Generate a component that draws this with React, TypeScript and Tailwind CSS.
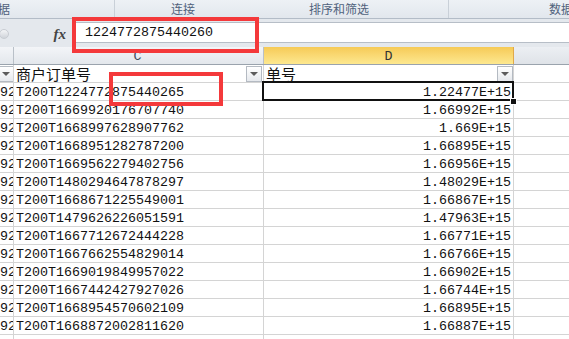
import React from "react";

const C_DATA = [
  "T200T1224772875440265",
  "T200T1669920176707740",
  "T200T1668997628907762",
  "T200T1668951282787200",
  "T200T1669562279402756",
  "T200T1480294647878297",
  "T200T1668671225549001",
  "T200T1479626226051591",
  "T200T1667712672444228",
  "T200T1667662554829014",
  "T200T1669019849957022",
  "T200T1667442427927026",
  "T200T1668954570602109",
  "T200T1668872002811620",
];
const D_DATA = [
  "1.22477E+15",
  "1.66992E+15",
  "1.669E+15",
  "1.66895E+15",
  "1.66956E+15",
  "1.48029E+15",
  "1.66867E+15",
  "1.47963E+15",
  "1.66771E+15",
  "1.66766E+15",
  "1.66902E+15",
  "1.66744E+15",
  "1.66895E+15",
  "1.66887E+15",
];

const mono = { fontFamily: '"Liberation Mono", "DejaVu Sans Mono", monospace' };
const cjk = { fontFamily: '"Noto Sans CJK SC", "Noto Sans", sans-serif' };

function FilterBtn() {
  return (
    <div className="w-[16px] h-[16px] border border-[#b4bac2] bg-gradient-to-b from-white to-[#e6e9ed] flex items-center justify-center box-border">
      <div className="w-0 h-0 border-l-[4px] border-r-[4px] border-t-[4px] border-l-transparent border-r-transparent border-t-[#5c5c5c]" />
    </div>
  );
}

export default function App() {
  return (
    <div className="relative w-[569px] h-[339px] overflow-hidden bg-white text-[#111]">
      {/* Ribbon group labels */}
      <div
        className="h-[19px] flex border-b border-[#b3bcc7] bg-gradient-to-b from-[#edf1f5] to-[#e2e7ed] text-[12px] text-[#50627c] whitespace-nowrap"
        style={cjk}
      >
        <div className="w-[115px] border-r border-[#c9d0d8] flex items-center leading-none overflow-hidden">
          <span className="ml-[-2px]">据</span>
        </div>
        <div className="w-[333px] flex">
          <div className="w-[115px] flex items-center justify-center leading-none pl-[21px]">连接</div>
          <div className="flex-1 flex items-center justify-center leading-none">排序和筛选</div>
        </div>
        <div className="flex-1 min-w-0 border-l border-[#c9d0d8] flex items-center leading-none pl-[100px] overflow-hidden">
          <span className="shrink-0">数据</span>
        </div>
      </div>

      {/* Formula bar */}
      <div className="h-[28px] bg-[#e4e8ed] relative flex">
        <div className="w-[72px] flex items-center">
          <div className="w-[10px] h-[10px] rounded-full bg-gradient-to-b from-[#f4f5f7] to-[#d0d4da] border border-[#c8ccd2] translate-x-[-1px] translate-y-[1px]" />
          <span
            className="ml-auto mr-[6px] italic font-bold text-[15px] text-[#444] translate-y-[1px]"
            style={{ fontFamily: '"Liberation Serif", serif' }}
          >
            fx
          </span>
        </div>
        <div className="flex-1 mt-[3px] h-[21px] bg-white border-t border-b border-[#b7bec7] flex items-center pl-[13px] text-[13.33px] leading-none" style={mono}>
          1224772875440260
        </div>
      </div>

      {/* Column headers */}
      <div className="flex h-[18px] border-b border-[#9aa3ad] text-[13.33px] leading-none" style={mono}>
        <div className="w-[14px] border-r border-[#b9c0c8] bg-gradient-to-b from-[#f3f5f8] to-[#e3e7ec]" />
        <div className="w-[250px] border-r border-[#b9c0c8] bg-gradient-to-b from-[#f3f5f8] to-[#e3e7ec] flex items-center justify-center text-[#3b4a5c]">
          <span className="translate-y-[1px] translate-x-[-1px]">C</span>
        </div>
        <div className="w-[250px] border-r border-[#e0a94a] bg-gradient-to-b from-[#f6ca55] to-[#fde88f] flex items-center justify-center text-[#333]">
          <span className="translate-y-[1px]">D</span>
        </div>
        <div className="flex-1 bg-gradient-to-b from-[#eceff3] to-[#dfe3e8]" />
      </div>

      {/* Filter header row */}
      <div className="flex h-[18px] border-b border-[#d4d4d4]">
        <div className="w-[14px] border-r border-[#d4d4d4] overflow-hidden flex justify-end items-center">
          <div className="shrink-0 mr-[-1px]">
            <FilterBtn />
          </div>
        </div>
        <div className="w-[250px] border-r border-[#d4d4d4] flex items-center pl-[2px] pr-[1px]">
          <span className="text-[15px] leading-none text-[#111]" style={cjk}>
            商户订单号
          </span>
          <div className="ml-auto">
            <FilterBtn />
          </div>
        </div>
        <div className="w-[250px] border-r border-[#d4d4d4] flex items-center pl-[2px]">
          <span className="text-[15px] leading-none text-[#111]" style={cjk}>
            单号
          </span>
          <div className="ml-auto">
            <FilterBtn />
          </div>
        </div>
        <div className="flex-1" />
      </div>

      {/* Data rows */}
      {C_DATA.map((c, i) => (
        <div key={i} className="flex h-[18px] border-b border-[#d4d4d4] text-[13.33px] leading-none" style={mono}>
          <div className="w-[14px] border-r border-[#d4d4d4] overflow-hidden flex items-center">
            <span className="whitespace-nowrap translate-y-[1px]">92</span>
          </div>
          <div className="w-[250px] border-r border-[#d4d4d4] flex items-center pl-[2px] whitespace-nowrap">
            <span className="translate-y-[1px]">{c}</span>
          </div>
          <div className="w-[250px] border-r border-[#d4d4d4] flex items-center justify-end pr-[2px] whitespace-nowrap">
            <span className="translate-y-[1px]">{D_DATA[i]}</span>
          </div>
          <div className="flex-1" />
        </div>
      ))}
      <div className="flex h-[10px]">
        <div className="w-[14px] border-r border-[#d4d4d4]" />
        <div className="w-[250px] border-r border-[#d4d4d4]" />
        <div className="w-[250px] border-r border-[#d4d4d4]" />
      </div>

      {/* Selected cell */}
      <div className="absolute left-[262px] top-[81px] w-[252px] h-[20px] border-2 border-[#111] pointer-events-none" />
      <div className="absolute left-[510px] top-[98px] w-[5px] h-[5px] bg-[#111] border border-white box-content pointer-events-none" />

      {/* Red annotation boxes */}
      <div className="absolute left-[72px] top-[17px] w-[187px] h-[36px] border-[4px] border-[#f4393b] pointer-events-none" />
      <div className="absolute left-[109px] top-[72px] w-[114px] h-[34px] border-[4px] border-[#f4393b] pointer-events-none" />
    </div>
  );
}
